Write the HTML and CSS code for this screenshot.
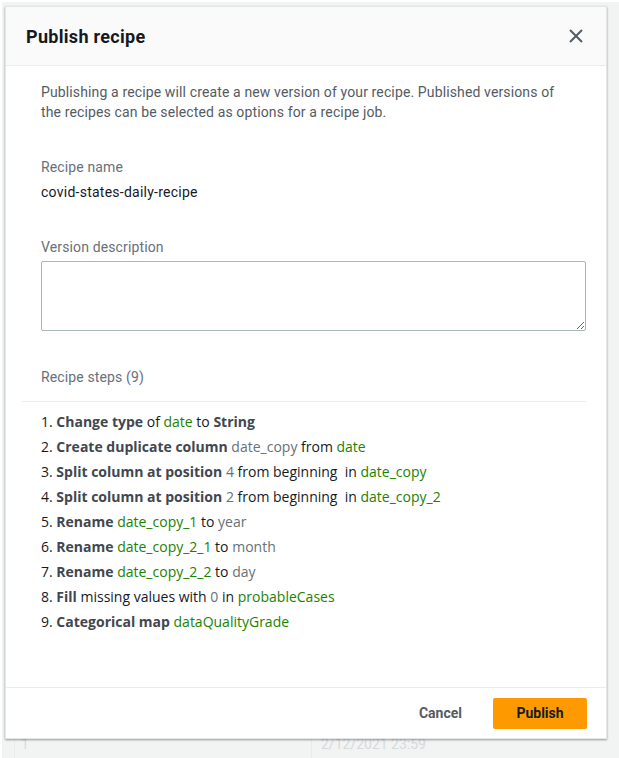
FILE: index.html
```html
<!DOCTYPE html>
<html>
<head>
<meta charset="utf-8">
<link rel="stylesheet" href="styles.css">
</head>
<body>
<div class="backdrop">
  <div class="bg-row"><span class="bg-cell c1">1</span><span class="bg-cell c2">2/12/2021 23:59</span></div>
</div>
<div class="modal">
  <div class="modal-header">
    <h2 class="title">Publish recipe</h2>
    <button class="close" aria-label="Close">
      <svg width="14" height="14" viewBox="0 0 14 14"><path d="M1 1 L13 13 M13 1 L1 13" stroke="#545b64" stroke-width="2" fill="none"/></svg>
    </button>
  </div>
  <div class="modal-body">
    <p class="intro">Publishing a recipe will create a new version of your recipe. Published versions of the recipes can be selected as options for a recipe job.</p>
    <div class="field">
      <div class="label">Recipe name</div>
      <div class="value">covid-states-daily-recipe</div>
    </div>
    <div class="field">
      <div class="label">Version description</div>
      <textarea class="textarea"></textarea>
    </div>
    <div class="label steps-label">Recipe steps (9)</div>
    <div class="divider"></div>
    <ol class="steps">
      <li>1. <b>Change type</b> of <span class="g">date</span> to <b>String</b></li>
      <li>2. <b>Create duplicate column</b> <span class="m">date_copy</span> from <span class="g">date</span></li>
      <li>3. <b>Split column at position</b> <span class="m">4</span> from beginning &nbsp;in <span class="g">date_copy</span></li>
      <li>4. <b>Split column at position</b> <span class="m">2</span> from beginning &nbsp;in <span class="g">date_copy_2</span></li>
      <li>5. <b>Rename</b> <span class="g">date_copy_1</span> to <span class="m">year</span></li>
      <li>6. <b>Rename</b> <span class="g">date_copy_2_1</span> to <span class="m">month</span></li>
      <li>7. <b>Rename</b> <span class="g">date_copy_2_2</span> to <span class="m">day</span></li>
      <li>8. <b>Fill</b> missing values with <span class="m">0</span> in <span class="g">probableCases</span></li>
      <li>9. <b>Categorical map</b> <span class="g">dataQualityGrade</span></li>
    </ol>
  </div>
  <div class="modal-footer">
    <button class="btn-link">Cancel</button>
    <button class="btn-primary">Publish</button>
  </div>
</div>
</body>
</html>
```
FILE: styles.css
```css
html, body {
  margin: 0;
  padding: 0;
}
body {
  width: 619px;
  height: 758px;
  background: #fff;
  font-family: Roboto, "Liberation Sans", sans-serif;
  position: relative;
  overflow: hidden;
}
.backdrop {
  position: absolute;
  left: 2px;
  top: 2px;
  right: 0;
  bottom: 0;
  background: #f2f3f3;
}
.bg-row {
  position: absolute;
  left: 12px;
  top: 728px;
  width: 600px;
  height: 30px;
  display: flex;
  align-items: flex-end;
  color: #d5dbdb;
  font-size: 14px;
}
.bg-cell { padding-bottom: 8px; }
.c1 { width: 290px; padding-left: 6px; border-left: 1px solid #e9ebed; }
.c2 { padding-left: 9px; border-left: 1px solid #e9ebed; }
.modal {
  position: absolute;
  left: 5px;
  top: 6px;
  width: 600px;
  height: 731px;
  background: #fff;
  border: 1px solid #e3e5e6;
  box-shadow: 0 1px 2px rgba(0,28,36,0.4);
  display: flex;
  flex-direction: column;
}
.modal-header {
  height: 58px;
  background: #fafafa;
  border-bottom: 1px solid #eaeded;
  display: flex;
  align-items: center;
  justify-content: space-between;
  padding: 0 23px 0 20px;
  flex-shrink: 0;
}
.title {
  margin: 0;
  font-size: 18px;
  font-weight: 700;
  letter-spacing: 0.3px;
  color: #16191f;
}
.close {
  border: 0;
  background: none;
  padding: 0;
  width: 14px;
  height: 14px;
  display: block;
}
.close svg { display: block; }
.modal-body {
  flex: 1;
  padding: 16px 19px 0 35px;
  letter-spacing: 0.13px;
}
.intro {
  margin: 0;
  max-width: 530px;
  font-size: 14px;
  line-height: 20px;
  color: #545b64;
}
.field { margin-top: 35px; }
.label {
  font-size: 14px;
  line-height: 20px;
  color: #687078;
}
.value {
  font-size: 14px;
  line-height: 20px;
  color: #16191f;
  margin-top: 5px;
  letter-spacing: 0.25px;
}
.textarea {
  display: block;
  margin-top: 4px;
  width: 545px;
  height: 70px;
  box-sizing: border-box;
  border: 1px solid #aab7b8;
  border-radius: 2px;
  resize: vertical;
  font-family: inherit;
}
.steps-label { margin-top: 36px; }
.divider {
  margin: 14px 0 0 -19px;
  width: 564px;
  border-top: 1px solid #eaeded;
}
.steps {
  list-style: none;
  margin: 7px 0 0 0;
  padding: 0;
  font-family: "Open Sans", sans-serif;
  font-size: 14px;
  letter-spacing: 0;
  color: #16191f;
}
.steps li {
  line-height: 25px;
}
.steps b { font-weight: 700; color: #414750; }
.g { color: #1d8102; }
.m { color: #687078; }
.modal-footer {
  height: 50px;
  border-top: 1px solid #eaeded;
  display: flex;
  align-items: center;
  justify-content: flex-end;
  padding: 0 19px 0 0;
  gap: 31px;
  flex-shrink: 0;
}
.btn-link {
  border: 0;
  background: none;
  font-family: inherit;
  font-size: 14px;
  font-weight: 700;
  color: #545b64;
  padding: 0;
}
.btn-primary {
  width: 94px;
  height: 31px;
  background: #ff9900;
  border: 0;
  border-radius: 2px;
  font-family: inherit;
  font-size: 14px;
  font-weight: 700;
  color: #16191f;
}
```
